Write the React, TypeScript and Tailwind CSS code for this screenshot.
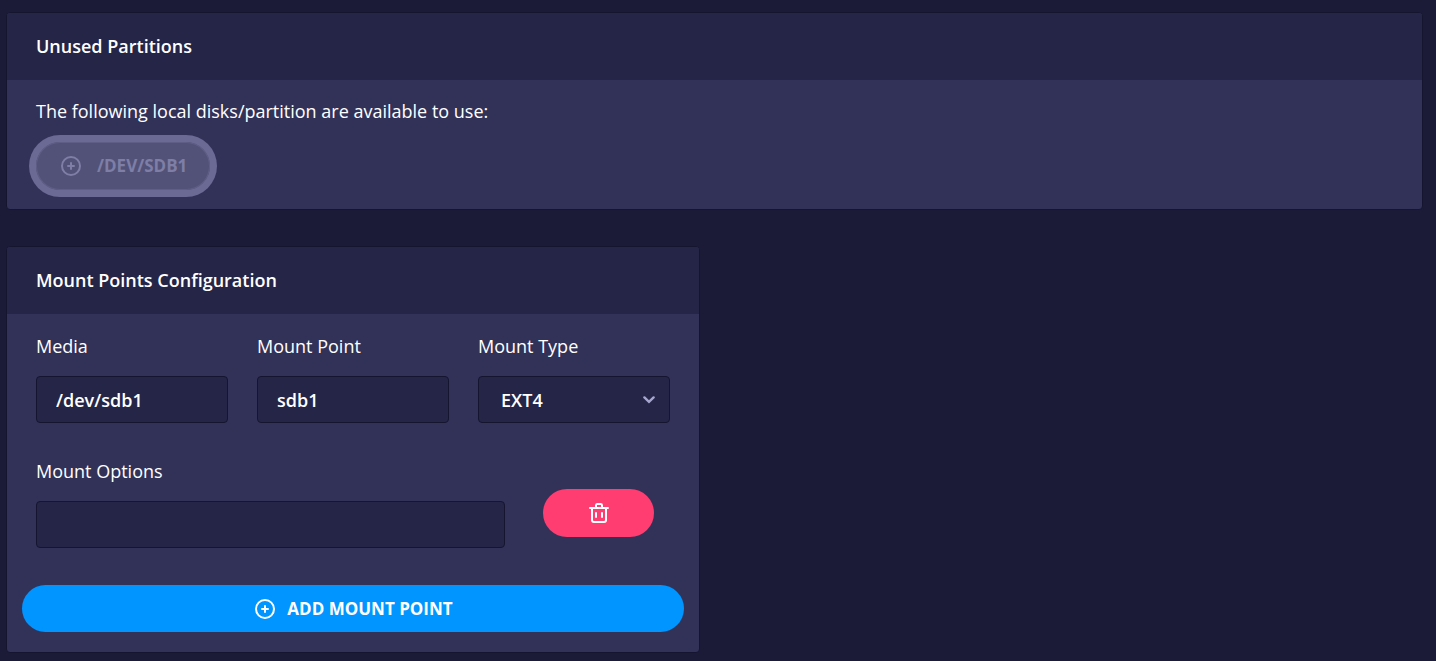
import { useId, useState } from 'react';
import type { ReactNode } from 'react';

const MOUNT_TYPES = ['EXT4', 'EXT3', 'XFS', 'BTRFS', 'NTFS'];

const FIELD_CLASS =
  'block h-[47px] w-full rounded-sm border border-[#151530] bg-[#252547] text-lg leading-6 font-semibold text-white outline-none';

function PlusCircleIcon() {
  return (
    <svg viewBox="0 0 24 24" className="size-6 shrink-0" fill="currentColor" aria-hidden="true">
      <path d="M12 2a10 10 0 1 0 10 10A10 10 0 0 0 12 2zm0 18a8 8 0 1 1 8-8 8 8 0 0 1-8 8z" />
      <path d="M15 11h-2V9a1 1 0 0 0-2 0v2H9a1 1 0 0 0 0 2h2v2a1 1 0 0 0 2 0v-2h2a1 1 0 0 0 0-2z" />
    </svg>
  );
}

function TrashIcon() {
  return (
    <svg viewBox="0 0 24 24" className="size-6 shrink-0" fill="currentColor" aria-hidden="true">
      <path d="M21 6h-5V4.33A2.42 2.42 0 0 0 13.5 2h-3A2.42 2.42 0 0 0 8 4.33V6H3a1 1 0 0 0 0 2h1v11a3 3 0 0 0 3 3h10a3 3 0 0 0 3-3V8h1a1 1 0 0 0 0-2zM10 4.33c0-.16.21-.33.5-.33h3c.29 0 .5.17.5.33V6h-4zM18 19a1 1 0 0 1-1 1H7a1 1 0 0 1-1-1V8h12z" />
      <path d="M9 17a1 1 0 0 0 1-1v-4a1 1 0 0 0-2 0v4a1 1 0 0 0 1 1zM15 17a1 1 0 0 0 1-1v-4a1 1 0 0 0-2 0v4a1 1 0 0 0 1 1z" />
    </svg>
  );
}

function Card({ title, children }: { title: string; children: ReactNode }) {
  return (
    <section className="overflow-hidden rounded-sm border border-[#151530] bg-[#323259]">
      <h2 className="bg-[#252547] px-[29px] py-[21px] text-lg leading-[25px] font-semibold">{title}</h2>
      {children}
    </section>
  );
}

function TextField({ label, value, onChange }: { label: string; value: string; onChange: (value: string) => void }) {
  const id = useId();
  return (
    <div className="min-w-0 flex-1">
      <label htmlFor={id} className="mb-4 block text-lg leading-7">{label}</label>
      <input
        id={id}
        type="text"
        value={value}
        onChange={(e) => onChange(e.target.value)}
        className={`${FIELD_CLASS} px-[19px]`}
      />
    </div>
  );
}

export default function App() {
  const typeId = useId();
  const [media, setMedia] = useState('/dev/sdb1');
  const [mountPoint, setMountPoint] = useState('sdb1');
  const [mountType, setMountType] = useState('EXT4');
  const [options, setOptions] = useState('');

  return (
    <main className="min-h-screen bg-[#1b1b38] pt-3 pr-[13px] pb-2 pl-1.5 font-['Open_Sans',sans-serif] text-white">
      <Card title="Unused Partitions">
        <div className="px-[29px] pt-[17px] pb-[19px]">
          <p className="mb-[17px] text-lg leading-7">The following local disks/partition are available to use:</p>
          {/* Already assigned below, so it can't be picked again */}
          <button
            type="button"
            disabled
            className="flex h-12 items-center gap-3.5 rounded-full bg-[#525278] px-[23px] text-[17px] leading-6 font-bold text-[#7e7ea6] ring-7 ring-[#6a6a94] inset-ring-1 inset-ring-[#5e5e86]"
          >
            <PlusCircleIcon />
            /DEV/SDB1
          </button>
        </div>
      </Card>

      <div className="mt-9 grid grid-cols-2 gap-[29px]">
        <Card title="Mount Points Configuration">
          <form className="px-[15px] pt-[18px] pb-5" onSubmit={(e) => e.preventDefault()}>
            <div className="flex gap-[29px] px-3.5">
              <TextField label="Media" value={media} onChange={setMedia} />
              <TextField label="Mount Point" value={mountPoint} onChange={setMountPoint} />
              <div className="min-w-0 flex-1">
                <label htmlFor={typeId} className="mb-4 block text-lg leading-7">Mount Type</label>
                <div className="relative">
                  <select
                    id={typeId}
                    value={mountType}
                    onChange={(e) => setMountType(e.target.value)}
                    className={`${FIELD_CLASS} appearance-none pr-12 pl-[22px]`}
                  >
                    {MOUNT_TYPES.map((type) => (
                      <option key={type}>{type}</option>
                    ))}
                  </select>
                  <svg
                    viewBox="0 0 12 8"
                    className="pointer-events-none absolute top-5 right-[15px] h-2 w-3"
                    fill="none"
                    stroke="#a6a6ce"
                    strokeWidth="2.4"
                    strokeLinecap="round"
                    aria-hidden="true"
                  >
                    <path d="M1.4 1.4L6 5.8l4.6-4.4" />
                  </svg>
                </div>
              </div>
            </div>

            <div className="mt-[34px] flex items-end px-3.5">
              <TextField label="Mount Options" value={options} onChange={setOptions} />
              <button
                type="button"
                aria-label="Remove mount point"
                className="mr-4 mb-[11px] ml-[38px] flex h-12 w-[111px] items-center justify-center rounded-full bg-[#ff3d71]"
              >
                <TrashIcon />
              </button>
            </div>

            <button
              type="submit"
              className="mt-[37px] flex h-[47px] w-full items-center justify-center gap-2.5 rounded-full bg-[#0095ff] text-[17px] leading-6 font-bold"
            >
              <PlusCircleIcon />
              ADD MOUNT POINT
            </button>
          </form>
        </Card>
      </div>
    </main>
  );
}
